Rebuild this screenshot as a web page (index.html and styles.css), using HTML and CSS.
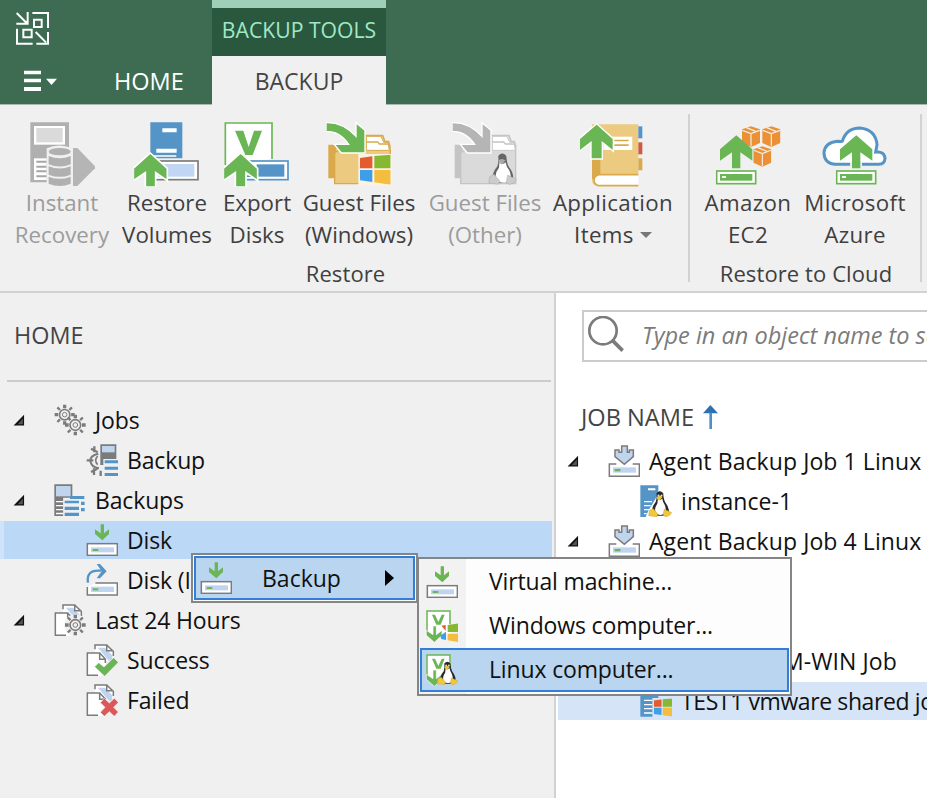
FILE: index.html
```html
<!DOCTYPE html>
<html lang="en">
<head>
<meta charset="utf-8">
<title>Backup console</title>
<link rel="stylesheet" href="styles.css">
</head>
<body>
<svg class="defs" width="0" height="0" aria-hidden="true">
  <defs>
    <symbol id="caret" viewBox="0 0 39 39"><path d="M36 1V36H2Z" fill="#111"/><path d="M32 13V32H15Z" fill="#555"/></symbol>
    <symbol id="disk" viewBox="0 0 96 96">
      <path d="M44 1h10v27l15-12v14L49 49 27 30V16l17 12z" fill="#6ab654"/>
      <rect x="4" y="59" width="90" height="35" fill="#fff" stroke="#7b7b7b" stroke-width="4.5"/>
      <rect x="15" y="70" width="69" height="15" fill="#bfd5ef"/><rect x="20" y="75" width="17" height="6" fill="#6ab654"/>
    </symbol>
    <symbol id="agent" viewBox="0 0 96 96">
      <path d="M41 3h17v19h6v-7h12v20L49 58 21 35V15h12v7h8z" fill="#bfd5ef" stroke="#7b7b7b" stroke-width="4.5"/>
      <path d="M26 54H4v40h90V54H72L50 67Z" fill="#fff"/><path d="M25 57H4v37h90V57H74" fill="none" stroke="#7b7b7b" stroke-width="4.5"/>
      <rect x="15" y="67" width="69" height="16" fill="#bfd5ef"/><rect x="20" y="72" width="17" height="7" fill="#6ab654"/>
    </symbol>
    <symbol id="penguin" viewBox="0 0 72 80">
      <path d="M25 9Q35-3 45 9Q46 27 51 35Q65 53 61 68L48 75H21L12 66Q9 51 23 34Q27 22 25 9Z" fill="#29292b"/>
      <path d="M29 25Q37 31 42 24Q44 35 50 44Q57 62 45 71Q34 76 23 68Q17 54 28 38Z" fill="#fff"/>
      <path d="M27 19Q35 13 43 20L34 30L26 24Z" fill="#f1c231"/><circle cx="31" cy="15" r="3" fill="#ddd"/><circle cx="40" cy="15" r="3" fill="#ddd"/>
      <path d="M4 60L15 54L29 70L26 78L2 75ZM48 56L59 61L70 66L65 73L53 79L45 74Z" fill="#f1c73c" stroke="#d7a22f" stroke-width="1.5"/>
    </symbol>
    <symbol id="penguin-gray" viewBox="0 0 72 80">
      <path d="M25 9Q35-3 45 9Q46 27 51 35Q65 53 61 68L48 75H21L12 66Q9 51 23 34Q27 22 25 9Z" fill="#666"/>
      <path d="M28 25Q37 31 43 24Q45 35 52 44Q61 62 47 73Q34 77 21 70Q14 54 27 38Z" fill="#fff"/>
      <path d="M27 19Q35 13 43 20L34 30L26 24Z" fill="#aaa"/>
      <path d="M4 60L15 54L29 70L26 78L2 75ZM48 56L59 61L70 66L65 73L53 79L45 74Z" fill="#ccc" stroke="#b0b0b0" stroke-width="1.5"/>
    </symbol>
    <symbol id="v-doc" viewBox="0 0 96 96">
      <path d="M2 3h71v70H2z" fill="#fff"/><path d="M3 72V3H72V43" fill="none" stroke="#6ab654" stroke-width="4.5"/>
      <path d="M18 14h9l10 22 10-22h9L44 44H31Z" fill="#6ab654"/>
      <path d="M21 48h10v26l17-13v15L25 97 1 76V61l20 13z" fill="#6ab654" stroke="#fff" stroke-width="2"/>
    </symbol>
    <symbol id="windows" viewBox="0 0 92 90">
      <path d="M0 10L37 5V41H0Z" fill="#e65b2e"/><path d="M43 4L92 0V41H43Z" fill="#86b931"/><path d="M0 46H37V82L0 77Z" fill="#3e9ee8"/><path d="M43 46H92V90L43 83Z" fill="#f5bd3f"/>
    </symbol>
    <symbol id="gear" viewBox="0 0 66 66">
      <circle cx="33" cy="33" r="16" fill="#f0f0f0" stroke="#7b7b7b" stroke-width="5"/><circle cx="33" cy="33" r="7" fill="none" stroke="#7b7b7b" stroke-width="3"/>
      <g fill="#7b7b7b"><path d="M28 2h10v11H28zM28 53h10v11H28zM2 28h11v10H2zM53 28h11v10H53z"/><path d="M8 13l5-5 8 8-5 5zM45 50l5-5 8 8-5 5zM53 8l5 5-8 8-5-5zM16 45l5 5-8 8-5-5z"/></g>
    </symbol>
    <symbol id="pages" viewBox="0 0 96 96">
      <path d="M26 20V3H62L82 23V52H40Z" fill="#fff"/><path d="M36 11H56L79 34V50H68Z" fill="#bfd5ef"/>
      <path d="M27 16V3H62V20H82M62 3L82 22V36" fill="none" stroke="#7b7b7b" stroke-width="4.5"/>
      <path d="M3 27H42L60 46V95H3Z" fill="#fff"/><path d="M36 94H4V27H41V46H58V57M41 27L58 45" fill="none" stroke="#7b7b7b" stroke-width="4.5"/>
    </symbol>
    <symbol id="cube" viewBox="0 0 56 64"><path d="M28 1L55 10V51L28 63L1 51V10Z" fill="#ea9137"/><path d="M2 13L28 23L54 13M28 23V61M14 5L42 16" fill="none" stroke="#f7eee3" stroke-width="3.5"/></symbol>
    <symbol id="drive" viewBox="0 0 124 45"><rect x="3" y="3" width="117" height="38" fill="#fff" stroke="#6ab654" stroke-width="5"/><rect x="13" y="12" width="97" height="20" fill="#6ab654"/><rect x="19" y="18" width="12" height="6" fill="#fff"/></symbol>
  </defs>
</svg>

<div class="app">
  <header class="titlebar">
    <div class="brand">
      <svg class="logo" viewBox="48 36 99 99"><g fill="none" stroke="#fff" stroke-width="6"><path d="M50 39L80 69M83 36V71H49M97 39H144V84M51 86V131H98M102 59H125V81H102ZM70 89H95V112H70ZM107 96L138 127M144 96V131H109"/></g></svg>
      <nav class="menu-bar">
        <svg class="burger" viewBox="72 208 99 66"><path d="M72 210h51v11H72zM72 234h51v11H72zM72 259h51v12H72zM138 234h33l-16.500 19z" fill="#fff"/></svg>
        <span class="home-tab">HOME</span>
      </nav>
    </div>
    <div class="tools">
      <div class="tools-title">BACKUP TOOLS</div>
      <div class="tab-active">BACKUP</div>
    </div>
  </header>

  <section class="ribbon">
    <div class="group restore">
      <div class="buttons">
        <div class="button disabled">
          <svg viewBox="87 48 198 198"><path d="M91 52H207V130H145V232H91Z" fill="#b0b0b0"/><rect x="102" y="63" width="93" height="56" fill="#fff"/><rect x="109" y="69" width="79" height="43" fill="#dadada"/><path d="M102 160H140V225H102Z" fill="#fff"/><path d="M109 167h31v6h-31zM109 182h31v6h-31zM109 196h31v6h-31zM109 211h31v6h-31z" fill="#a6a6a6"/><path d="M140 130Q178 113 216 130V243Q178 252 140 243Z" fill="#f0f0f0"/><path d="M219 129H232L285 184V190L232 243H219Z" fill="#b5b5b5"/><ellipse cx="179" cy="140" rx="33" ry="11" fill="#b0b0b0"/><path d="M146 153Q179 167 212 153V178Q179 191 146 178ZM146 184Q179 197 212 184V209Q179 222 146 209ZM146 215Q179 228 212 215V236Q179 250 146 236Z" fill="#b0b0b0"/></svg>
          <span>Instant<br>Recovery</span>
        </div>
        <div class="button">
          <svg viewBox="402 48 198 198"><path d="M451 52H547V160H451Z" fill="#5494c6"/><path d="M487 70h43v12h-43zM469 131h61v12h-61zM461 151h68v4h-68z" fill="#fff"/><rect x="460" y="168" width="134" height="56" fill="#fff" stroke="#7b7b7b" stroke-width="5"/><rect x="474" y="177" width="109" height="38" fill="#c0d6f2"/><path d="M451 144L502 190V227L467 203V246H436V203L400 227V190Z" fill="#6ab654" stroke="#fff" stroke-width="5"/></svg>
          <span>Restore<br>Volumes</span>
        </div>
        <div class="button">
          <svg viewBox="672 48 198 198"><path d="M676 180V54H816V162" fill="#fff" stroke="#6ab654" stroke-width="5"/><path d="M705 77H730L746 126L762 77H786L758 150H736Z" fill="#6ab654"/><rect x="735" y="168" width="129" height="56" fill="#fff" stroke="#5494c6" stroke-width="5"/><rect x="770" y="178" width="83" height="37" fill="#5494c6"/><path d="M740 211h26v5h-26z" fill="#5494c6"/><path d="M722 144L773 190V227L738 203V246H706V203L670 227V190Z" fill="#6ab654" stroke="#fff" stroke-width="5"/></svg>
          <span>Export<br>Disks</span>
        </div>
        <div class="button">
          <svg viewBox="108 48 198 198"><path d="M115 119H132L140 127V220H115Z" fill="#d9a94c"/><path d="M220 91H278Q282 102 285 109H296Q301 121 301 140V236H134V143Z" fill="#ecca80" stroke="#d9a94c" stroke-width="4"/><path d="M229 94H273L281 112H294L298 136H229Z" fill="#fff" stroke="#d9a94c" stroke-width="3"/><path d="M229 111H263L268 117H294" fill="none" stroke="#d9a94c" stroke-width="4"/><path d="M108 53Q158 51 198 94V53L225 76V144H154L133 118H176Q151 79 108 79Z" fill="#6ab654" stroke="#fff" stroke-width="4"/><rect x="205" y="147" width="101" height="96" fill="#faf3e4"/><use href="#windows" x="210" y="149" width="92" height="90"/></svg>
          <span>Guest Files<br>(Windows)</span>
        </div>
        <div class="button disabled">
          <svg viewBox="486 48 198 198"><path d="M494 119H510L518 127V220H494Z" fill="#c4c4c4"/><path d="M599 91H657Q661 102 664 109H673L677 120V236H512V143Z" fill="#dadada" stroke="#c4c4c4" stroke-width="4"/><path d="M607 94H651L659 112H672L676 136H607Z" fill="#fff" stroke="#c9c9c9" stroke-width="3"/><path d="M607 111H641L646 117H672" fill="none" stroke="#c4c4c4" stroke-width="4"/><path d="M486 53Q536 51 576 94V53L603 76V144H532L511 118H554Q529 79 486 79Z" fill="#b5b5b5" stroke="#fff" stroke-width="4"/><use href="#penguin-gray" x="593" y="142" width="90" height="98"/></svg>
          <span>Guest Files<br>(Other)</span>
        </div>
        <div class="button wide">
          <svg viewBox="-60 48 198 198"><path d="M-24 58H115V208H0V242H-12Q-24 240-24 222Z" fill="#ecca80"/><path d="M-24 100H1V210Q-14 214-24 224Z" fill="#d9a94c"/><path d="M115 209H-3Q-18 213-18 226Q-18 237-5 242H115" fill="#fff" stroke="#d9a94c" stroke-width="5"/><rect x="10" y="95" width="87" height="40" fill="#fff"/><path d="M43 104h43v5H43zM43 118h43v5H43z" fill="#d9a94c"/><path d="M115 64h12v36h-12z" fill="#5494c6"/><path d="M115 112h12v36h-12z" fill="#cd5b43"/><path d="M115 160h12v36h-12z" fill="#d9a94c"/><path d="M-10 56L40 101V139L7 112V162H-27V112L-62 139V101Z" fill="#6ab654" stroke="#fff" stroke-width="4"/></svg>
          <span>Application<br>Items <i class="drop"></i></span>
        </div>
      </div>
      <div class="group-name">Restore</div>
    </div>
    <div class="group cloud">
      <div class="buttons">
        <div class="button wide">
          <svg viewBox="345 48 198 198"><use href="#cube" x="425" y="63" width="56" height="64"/><use href="#cube" x="486" y="63" width="56" height="64"/><use href="#cube" x="459" y="123" width="56" height="63"/><path d="M409 91L457 133V167L421 142V190H396V142L360 167V133Z" fill="#6ab654"/><use href="#drive" x="347" y="195" width="124" height="45"/></svg>
          <span>Amazon<br>EC2</span>
        </div>
        <div class="button wide">
          <svg viewBox="666 48 198 198"><path d="M751 178H704Q672 173 672 143Q675 112 713 109Q727 110 727 109Q739 69 780 69Q827 74 831 119L827 141Q854 138 855 161Q853 179 835 178H786" fill="#fff" stroke="#5494c6" stroke-width="9"/><path d="M751 170h35v16h-35z" fill="#f0f0f0"/><path d="M769 91L817 133V167L781 142V190H756V142L720 167V133Z" fill="#6ab654"/><use href="#drive" x="707" y="195" width="124" height="45"/></svg>
          <span>Microsoft<br>Azure</span>
        </div>
      </div>
      <div class="group-name">Restore to Cloud</div>
    </div>
  </section>

  <div class="workspace">
    <aside class="sidebar">
      <h1 class="side-title">HOME</h1>
      <ul class="tree">
        <li class="row"><svg class="caret"><use href="#caret"/></svg><svg class="icon" viewBox="0 0 96 96"><use href="#gear" x="0" y="0" width="64" height="64"/><circle cx="65" cy="64" r="27" fill="#f0f0f0"/><use href="#gear" x="31" y="30" width="66" height="66"/></svg>Jobs</li>
        <li class="row child"><svg class="icon" viewBox="258 162 96 96"><path d="M283 169V187M273 176L293 187M260 211H280M273 246L292 236M282 255V235M302 242V258" stroke="#7b7b7b" stroke-width="7"/><path d="M295 191Q270 197 271 212Q273 232 297 235" fill="none" stroke="#7b7b7b" stroke-width="6"/><path d="M293 198Q281 211 293 224" fill="none" stroke="#7b7b7b" stroke-width="5"/><path d="M301 163H349V207H315V225H301Z" fill="#7b7b7b"/><rect x="306" y="168" width="38" height="19" fill="#bfd5ef"/><path d="M310 207H354V258H310Z" fill="#f0f0f0"/><path d="M314 211h40v9h-40zM314 230h40v9h-40zM314 249h40v9h-40z" fill="#5494c6"/></svg>Backup</li>
        <li class="row"><svg class="caret"><use href="#caret"/></svg><svg class="icon" viewBox="162 282 96 96"><path d="M163 283H217V323H190V378H163Z" fill="#7b7b7b"/><rect x="168" y="288" width="44" height="31" fill="#bfd5ef"/><path d="M168 333h22v4h-22zM168 345h22v4h-22zM168 357h22v4h-22zM168 368h22v5h-22z" fill="#fff"/><path d="M190 325H239V378H190Z" fill="#f0f0f0"/><path d="M194 332h43v8h-43zM194 350h43v10h-43zM194 368h43v10h-43zM210 318h43v9h-43zM243 335h11v10h-11zM243 354h11v10h-11z" fill="#5494c6"/></svg>Backups</li>
        <li class="row child selected"><svg class="icon"><use href="#disk"/></svg>Disk</li>
        <li class="row child"><svg class="icon" viewBox="258 12 96 96"><path d="M264 68Q258 32 294 32H304" fill="none" stroke="#5494c6" stroke-width="7"/><path d="M290 12h10l20 22-20 21h-10l15-21z" fill="#5494c6"/><path d="M286 69H352V105H262V81" fill="#fff" stroke="#7b7b7b" stroke-width="4.500"/><rect x="273" y="80" width="69" height="16" fill="#bfd5ef"/><rect x="278" y="85" width="17" height="6" fill="#6ab654"/></svg>Disk (I</li>
        <li class="row"><svg class="caret"><use href="#caret"/></svg><svg class="icon" viewBox="0 0 96 96"><use href="#pages" width="96" height="96"/><circle cx="64" cy="64" r="33" fill="#f0f0f0"/><use href="#gear" x="31" y="30" width="66" height="66"/></svg>Last 24 Hours</li>
        <li class="row child"><svg class="icon" viewBox="0 0 96 96"><use href="#pages" width="96" height="96"/><path d="M26 68L38 56L54 69L83 41L97 55L56 97Z" fill="#6ab654" stroke="#f0f0f0" stroke-width="2"/></svg>Success</li>
        <li class="row child"><svg class="icon" viewBox="0 0 96 96"><use href="#pages" width="96" height="96"/><path d="M55 43L70 57L85 43L97 55L83 70L97 84L85 97L70 83L55 97L43 85L57 70L43 56Z" fill="#dc5757" stroke="#f0f0f0" stroke-width="2"/></svg>Failed</li>
      </ul>
    </aside>
    <main class="content">
      <div class="search"><svg class="lens" viewBox="99 63 108 108"><circle cx="144" cy="107" r="41" fill="none" stroke="#7b7b7b" stroke-width="8"/><path d="M173 137L203 167" stroke="#7b7b7b" stroke-width="11"/></svg><span>Type in an object name to search for</span></div>
      <div class="column-head">JOB NAME<svg class="sort" viewBox="445 327 45 72"><path d="M445 352L467 327L490 352Z" fill="#2e70b4"/><path d="M464 350h8v49h-8z" fill="#4d8fca"/></svg></div>
      <ul class="jobs">
        <li class="row"><svg class="caret"><use href="#caret"/></svg><svg class="icon"><use href="#agent"/></svg>Agent Backup Job 1 Linux</li>
        <li class="row child"><svg class="icon" viewBox="255 573 96 96"><path d="M256 574H310V600L280 650L272 669H256Z" fill="#5494c6"/><path d="M279 583h22v6h-22zM267 621h24v4h-24zM267 633h20v4h-20zM267 645h15v4h-15zM267 657h8v4h-8z" fill="#fff"/><use href="#penguin" x="278" y="589" width="75" height="81"/></svg>instance-1</li>
        <li class="row"><svg class="caret"><use href="#caret"/></svg><svg class="icon"><use href="#agent"/></svg>Agent Backup Job 4 Linux</li>
        <li class="row"></li>
        <li class="row"></li>
        <li class="row win-job">M-WIN Job</li>
        <li class="row child job-selected"><svg class="icon" viewBox="255 140 96 96"><path d="M256 141H310V179H292V235H256Z" fill="#5494c6"/><path d="M267 184h25v4h-25zM267 197h25v4h-25zM267 209h25v4h-25zM267 222h25v4h-25z" fill="#fff"/><use href="#windows" x="297" y="180" width="56" height="55"/></svg>TEST1 vmware shared job</li>
      </ul>
    </main>
  </div>
</div>

<div class="context-menu">
  <div class="item active"><svg class="icon"><use href="#disk"/></svg><span>Backup</span><i class="more"></i></div>
</div>
<div class="submenu">
  <div class="item"><svg class="icon"><use href="#disk"/></svg><span>Virtual machine...</span></div>
  <div class="item"><svg class="icon" viewBox="0 0 96 96"><use href="#v-doc" width="96" height="96"/><path d="M46 47L59 45V62Z" fill="#e65b2e"/><path d="M43 77L60 65V90L46 87Z" fill="#3e9ee8"/><path d="M65 45L97 40V66H65Z" fill="#86b931"/><path d="M65 71H97V96L65 91Z" fill="#f5bd3f"/></svg><span>Windows computer...</span></div>
  <div class="item active"><svg class="icon" viewBox="0 0 96 96"><use href="#v-doc" width="96" height="96"/><use href="#penguin" x="32" y="17" width="66" height="80"/></svg><span>Linux computer...</span></div>
</div>
</body>
</html>
```
FILE: styles.css
```css
* { box-sizing: border-box; }
body {
  margin: 0;
  font-family: "Open Sans", "Noto Sans", sans-serif;
  font-size: 23px;
  color: #111;
  background: #fff;
  overflow: hidden;
}
ul { list-style: none; margin: 0; padding: 0; }
svg { display: block; flex: none; }
.defs { position: absolute; }
.app { width: 927px; height: 798px; display: flex; flex-direction: column; overflow: hidden; }

.titlebar { height: 105px; flex: none; display: flex; background: #3d6c52; border-bottom: 1px solid #aab9af; }
.brand { width: 212px; padding: 12px 0 0 16px; }
.logo { width: 33px; height: 33px; }
.menu-bar { display: flex; align-items: center; margin-top: 20px; height: 32px; }
.burger { width: 33px; height: 22px; margin-left: 8px; }
.home-tab { margin-left: 57px; line-height: 32px; font-size: 23.5px; color: #fff; }
.tools { width: 174px; height: 105px; border-top: 8px solid #a0cfb8; text-align: center; }
.tools-title { height: 48px; line-height: 44px; background: #29583e; color: #a1e8c6; font-size: 21.2px; white-space: nowrap; }
.tab-active { height: 49px; line-height: 50px; background: #f0f0f0; color: #444; }

.ribbon { height: 188px; flex: none; display: flex; background: #f0f0f0; border-bottom: 2px solid #d2d2d2; font-size: 22.3px; color: #3f3f3f; }
.group { position: relative; padding-top: 16px; }
.group::after { content: ""; position: absolute; right: 0; top: 9px; width: 2px; height: 168px; background: #d2d2d2; }
.restore { width: 690px; padding-left: 8px; }
.cloud { width: 232px; }
.buttons { display: grid; height: 136px; }
.restore .buttons { grid-template-columns: 108px 102px 78px 126px 126px 130px; }
.cloud .buttons { grid-template-columns: 116px 98px; }
.button { display: flex; flex-direction: column; align-items: center; text-align: center; line-height: 32px; white-space: nowrap; }
.button > svg { width: 66px; height: 66px; }
.wide span { letter-spacing: .35px; }
.disabled { color: #9c9c9c; }
.drop { display: inline-block; border: 6px solid transparent; border-top-color: #777; border-bottom: 0; vertical-align: 5px; }
.group-name { line-height: 32px; text-align: center; font-size: 22px; letter-spacing: .1px; }
.restore .group-name { margin-right: 7px; }

.workspace { flex: 1; display: flex; min-height: 0; }
.sidebar { width: 556px; flex: none; background: #f0f0f0; border-right: 2px solid #d2d2d2; }
.side-title { margin: 0 3px 18px 7px; padding: 24px 0 0 7px; height: 89px; line-height: 36px; border-bottom: 2px solid #ccc; font-size: 23.4px; font-weight: 400; color: #444; }
.tree { height: 320px; letter-spacing: -.15px; }
.row { height: 40px; display: flex; align-items: center; gap: 9px; padding-left: 13px; white-space: nowrap; line-height: 40px; }
.caret { width: 12px; height: 13px; margin-right: 20px; }
.icon { width: 32px; height: 32px; }
.child { padding-left: 86px; }
.selected { height: 38px; margin: 1px 2px 1px 0; background: linear-gradient(90deg, #cfe4fb 4px, #bbd8f7 4px); }

.content { flex: 1; min-width: 0; background: #fff; overflow: hidden; }
.search { width: 400px; height: 52px; margin: 17px 0 0 26px; border: 2px solid #ccc; display: flex; align-items: center; color: #7b7b7b; font-size: 23.5px; font-style: italic; white-space: nowrap; }
.lens { width: 36px; height: 36px; margin: -4px 0 0 4px; }
.search span { margin: -2px 0 0 18px; }
.column-head { height: 36px; margin: 37px 0 6px 25px; display: flex; align-items: center; gap: 9px; font-size: 23.6px; color: #444; }
.sort { width: 15px; height: 24px; }
.jobs .row { padding-left: 11px; letter-spacing: .08px; }
.jobs .caret { margin-right: 20px; }
.jobs .child { padding-left: 84px; }
.jobs .win-job { padding-left: 227px; }
.jobs .job-selected { height: 38px; margin: 1px 0 0 2px; background: #d5e5f7; padding-left: 82px; letter-spacing: -.4px; }

.context-menu, .submenu { position: absolute; background: #fdfdfd; border: 2px solid #858585; }
.context-menu { left: 191px; top: 553px; width: 227px; height: 50px; padding: 1px; }
.submenu { left: 417px; top: 557px; width: 375px; height: 139px; padding: 1px; background: linear-gradient(90deg, #f2f2f2 47px, #fdfdfd 47px); letter-spacing: -.15px; }
.item { display: flex; align-items: center; height: 44px; padding-left: 4px; border: 2px solid transparent; white-space: nowrap; line-height: 38px; }
.submenu .item span { margin: -2px 0 0 31px; }
.item.active { background: #bad5f0; border-color: #337fd6; }
.context-menu span { margin: -1px 0 0 30px; width: 123px; }
.more { border: 8px solid transparent; border-left: 9px solid #000; border-right: 0; }
```
